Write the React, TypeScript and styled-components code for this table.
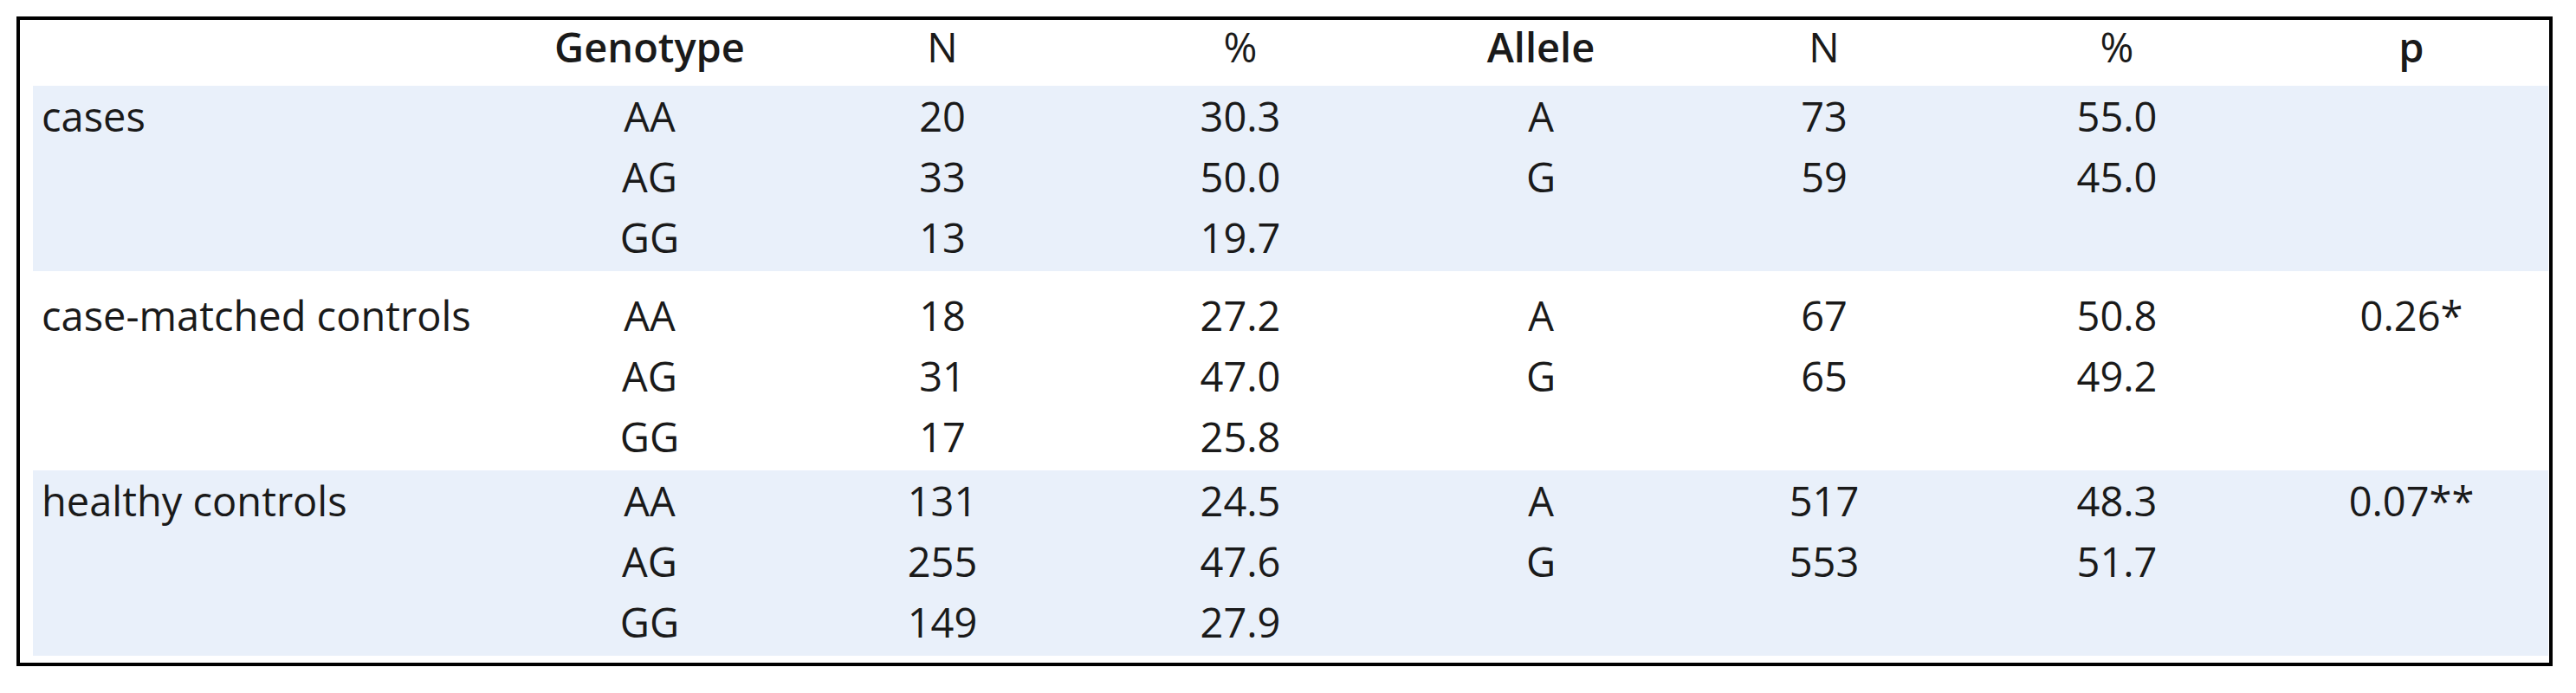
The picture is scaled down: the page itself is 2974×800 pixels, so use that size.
import styled, { createGlobalStyle } from 'styled-components'

const GlobalStyle = createGlobalStyle`
  body {
    margin: 0;
    background: #ffffff;
  }
`

const Page = styled.div`
  padding: 19px;
`

const Frame = styled.div`
  width: 2928px;
  box-sizing: border-box;
  border: 4px solid #000000;
  padding: 0 1px 8px 15px;
  font-family: "Open Sans", "Noto Sans", sans-serif;
  font-size: 47px;
  color: #1a1a1a;
`

const cols = '542px 340px 336px 352px 342px 312px 364px 316px'

const HeaderRow = styled.div`
  display: grid;
  grid-template-columns: ${cols};
  line-height: 62px;
  padding-bottom: 14px;
`

const Group = styled.div<{ $shaded?: boolean; $top?: number }>`
  background: ${(p) => (p.$shaded ? '#e9f0fa' : 'transparent')};
  padding-top: ${(p) => p.$top ?? 0}px;
  padding-bottom: 4px;
`

const Row = styled.div`
  display: grid;
  grid-template-columns: ${cols};
  line-height: 70px;
  height: 70px;
`

const Cell = styled.div<{ $bold?: boolean; $left?: boolean }>`
  text-align: ${(p) => (p.$left ? 'left' : 'center')};
  padding-left: ${(p) => (p.$left ? '10px' : '0')};
  font-weight: ${(p) => (p.$bold ? 600 : 400)};
  white-space: nowrap;
`

type Line = [string, string, string, string, string, string, string]

const groups: { label: string; shaded: boolean; top: number; lines: Line[] }[] = [
  {
    label: 'cases',
    shaded: true,
    top: 0,
    lines: [
      ['AA', '20', '30.3', 'A', '73', '55.0', ''],
      ['AG', '33', '50.0', 'G', '59', '45.0', ''],
      ['GG', '13', '19.7', '', '', '', ''],
    ],
  },
  {
    label: 'case-matched controls',
    shaded: false,
    top: 16,
    lines: [
      ['AA', '18', '27.2', 'A', '67', '50.8', '0.26*'],
      ['AG', '31', '47.0', 'G', '65', '49.2', ''],
      ['GG', '17', '25.8', '', '', '', ''],
    ],
  },
  {
    label: 'healthy controls',
    shaded: true,
    top: 0,
    lines: [
      ['AA', '131', '24.5', 'A', '517', '48.3', '0.07**'],
      ['AG', '255', '47.6', 'G', '553', '51.7', ''],
      ['GG', '149', '27.9', '', '', '', ''],
    ],
  },
]

const App = () => {
  return (
    <Page>
      <GlobalStyle />
      <Frame>
        <HeaderRow>
          <Cell $left />
          <Cell $bold>Genotype</Cell>
          <Cell>N</Cell>
          <Cell>%</Cell>
          <Cell $bold>Allele</Cell>
          <Cell>N</Cell>
          <Cell>%</Cell>
          <Cell $bold>p</Cell>
        </HeaderRow>
        {groups.map((g) => (
          <Group key={g.label} $shaded={g.shaded} $top={g.top}>
            {g.lines.map((line, i) => (
              <Row key={i}>
                <Cell $left>{i === 0 ? g.label : ''}</Cell>
                {line.map((v, j) => (
                  <Cell key={j}>{v}</Cell>
                ))}
              </Row>
            ))}
          </Group>
        ))}
      </Frame>
    </Page>
  )
}

export default App
